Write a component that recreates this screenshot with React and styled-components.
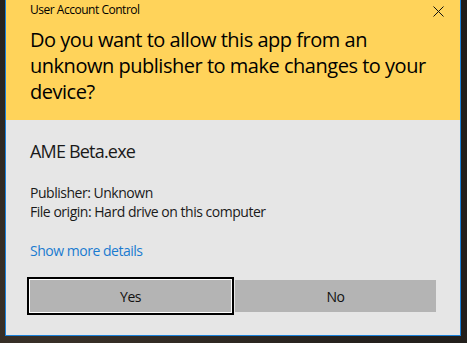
import React from "react";
import styled, { createGlobalStyle } from "styled-components";

const Global = createGlobalStyle`
  html, body { margin: 0; padding: 0; }
  body {
    background: #2a2520;
    font-family: "Open Sans", "Noto Sans", sans-serif;
    letter-spacing: -0.03em;
    width: 467px;
    height: 343px;
    overflow: hidden;
  }
`;

const Desktop = styled.div`
  width: 467px;
  height: 343px;
  background: radial-gradient(circle at 10% 90%, #3a3128 0%, #25211d 60%, #1f1c19 100%);
  padding-left: 5px;
  box-sizing: border-box;
`;

const Dialog = styled.div`
  width: 456px;
  box-sizing: border-box;
  border: 1px solid #1a80d8;
  border-top: none;
  display: flex;
  flex-direction: column;
`;

const Header = styled.div`
  background: #ffd35a;
  padding: 2px 16px 15px 24px;
  display: flex;
  flex-direction: column;
`;

const TitleRow = styled.div`
  display: flex;
  justify-content: space-between;
  align-items: flex-start;
`;

const Title = styled.div`
  font-size: 12px;
  line-height: 16px;
  color: #000;
`;

const Close = styled.svg`
  margin-top: 4px;
  width: 11px;
  height: 11px;
`;

const Question = styled.div`
  margin-top: 9px;
  padding-right: 8px;
  font-size: 20px;
  line-height: 26px;
  color: #000;
`;

const Body = styled.div`
  background: #e6e6e6;
  padding: 19px 24px 23px 24px;
  display: flex;
  flex-direction: column;
`;

const AppName = styled.div`
  font-size: 18px;
  line-height: 24px;
  letter-spacing: -0.045em;
  color: #1a1a1a;
`;

const Details = styled.div`
  margin-top: 20px;
  font-size: 14px;
  line-height: 19px;
  color: #1a1a1a;
`;

const Link = styled.a`
  margin-top: 20px;
  font-size: 14px;
  line-height: 19px;
  color: #1a7bd0;
  text-decoration: none;
  align-self: flex-start;
`;

const Buttons = styled.div`
  margin-top: 20px;
  display: flex;
  gap: 4px;
`;

const Button = styled.button`
  width: 201px;
  height: 32px;
  border: none;
  margin: 0;
  padding: 0;
  background: #b4b4b4;
  font-family: inherit;
  letter-spacing: inherit;
  font-size: 14px;
  color: #111;
  box-shadow: ${(p) => (p.$focused ? "0 0 0 1px #fff, 0 0 0 3px #000" : "none")};
  outline: none;
`;

export default function App() {
  return (
    <>
      <Global />
      <Desktop>
        <Dialog>
          <Header>
            <TitleRow>
              <Title>User Account Control</Title>
              <Close viewBox="0 0 11 11">
                <path d="M0.5 0.5 L10.5 10.5 M10.5 0.5 L0.5 10.5" stroke="#111" strokeWidth="1" fill="none" />
              </Close>
            </TitleRow>
            <Question>
              Do you want to allow this app from an unknown publisher to make changes to your device?
            </Question>
          </Header>
          <Body>
            <AppName>AME Beta.exe</AppName>
            <Details>
              Publisher: Unknown
              <br />
              File origin: Hard drive on this computer
            </Details>
            <Link>Show more details</Link>
            <Buttons>
              <Button $focused>Yes</Button>
              <Button>No</Button>
            </Buttons>
          </Body>
        </Dialog>
      </Desktop>
    </>
  );
}
